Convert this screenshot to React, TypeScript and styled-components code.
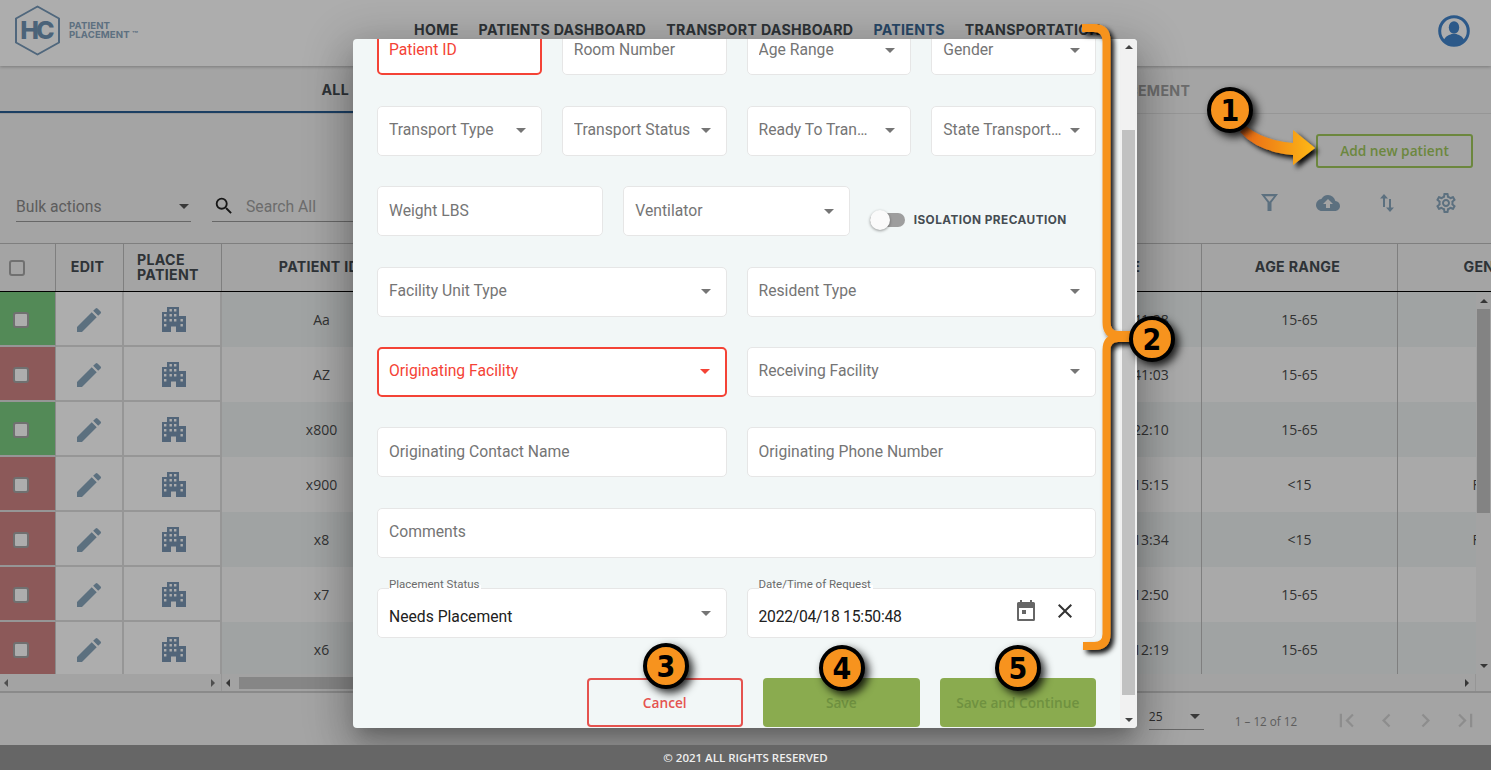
import React, { FC } from 'react'
import styled, { createGlobalStyle } from 'styled-components'
import {
  MdChevronLeft,
  MdChevronRight,
  MdClose,
  MdCloudUpload,
  MdEdit,
  MdFirstPage,
  MdLastPage,
  MdOutlineSettings,
  MdSearch,
} from 'react-icons/md'

const GlobalStyle = createGlobalStyle`
  html, body {
    margin: 0;
    height: 770px;
    overflow: hidden;
    background: #f2f2f2;
    font-family: 'Open Sans', sans-serif;
  }
  * { box-sizing: border-box; }
`

const Page = styled.div`
  width: 1491px;
  height: 770px;
  display: flex;
  flex-direction: column;
  position: relative;
  overflow: hidden;
`

/* ---------- top bar ---------- */

const Header = styled.header`
  height: 66px;
  flex: none;
  background: #fff;
  display: flex;
  align-items: center;
  padding: 0 20px 0 14px;
  box-shadow: 0 1px 3px rgba(0, 0, 0, 0.25);
  position: relative;
`

const Logo = styled.div`
  display: flex;
  align-items: center;
  width: 400px;
  flex: none;
  margin-top: -6px;
`

const HexMark = styled.div`
  width: 47px;
  height: 51px;
  position: relative;
  flex: none;
`

const HexLetters = styled.span`
  position: absolute;
  inset: 0;
  display: flex;
  align-items: center;
  justify-content: center;
  font: 800 25px 'Inter', sans-serif;
  letter-spacing: -3px;
  color: #6f93b3;
  padding-right: 3px;
`

const LogoText = styled.div`
  margin-left: 8px;
  font: 700 9.6px/9.5px 'Inter', sans-serif;
  color: #8aa5bd;
  letter-spacing: 0.1px;
`

const Nav = styled.nav`
  display: flex;
  gap: 20px;
  margin-top: -8px;
`

const NavItem = styled.span<{ $active?: boolean }>`
  font: 700 14.2px 'Inter', sans-serif;
  letter-spacing: 0.3px;
  color: ${(p) => (p.$active ? '#3c6a99' : '#454c52')};
  white-space: nowrap;
`

const Avatar = styled.div`
  margin-left: auto;
  width: 32px;
  height: 32px;
  color: #4184cb;
  margin-top: -4px;
  margin-right: 1px;
`

/* ---------- tabs ---------- */

const Tabs = styled.div`
  margin-top: 1px;
  height: 47px;
  flex: none;
  display: flex;
  border-bottom: 1px solid #ddd;
`

const Tab = styled.div<{ $active?: boolean }>`
  flex: 1;
  display: flex;
  align-items: center;
  justify-content: center;
  font: 700 14.2px 'Inter', sans-serif;
  letter-spacing: 0.3px;
  color: ${(p) => (p.$active ? '#454c52' : '#a0a0a0')};
  border-bottom: ${(p) => (p.$active ? '2px solid #2a5d92' : 'none')};
`

/* ---------- toolbar ---------- */

const Toolbar = styled.div`
  height: 129px;
  flex: none;
  display: flex;
  flex-direction: column;
`

const AddRow = styled.div`
  display: flex;
  justify-content: flex-end;
  padding: 20px 18px 0 0;
`

const AddButton = styled.button`
  width: 157px;
  height: 34px;
  padding-bottom: 2px;
  background: transparent;
  border: 2px solid #9fc85c;
  border-radius: 3px;
  color: #9fc85c;
  font: 600 13.7px 'Open Sans', sans-serif;
`

const ActionRow = styled.div`
  display: flex;
  align-items: flex-end;
  margin-top: 19px;
  padding-left: 16px;
`

const BulkSelect = styled.div`
  width: 175px;
  height: 31px;
  display: flex;
  align-items: center;
  justify-content: space-between;
  border-bottom: 1px solid #999;
  padding-right: 2px;
  font: 400 15.7px 'Roboto', sans-serif;
  color: #8a8a8a;
`

const SearchBox = styled.div`
  margin-left: 21px;
  width: 300px;
  height: 31px;
  display: flex;
  align-items: center;
  gap: 11px;
  border-bottom: 1px solid #999;
  font: 400 15.7px 'Roboto', sans-serif;
  color: #a0a0a0;
  svg {
    color: #222;
    margin-left: 1px;
  }
`

const ToolIcons = styled.div`
  margin-left: auto;
  display: flex;
  align-items: center;
  padding-right: 33px;
  gap: 35px;
  height: 31px;
  margin-bottom: 4px;
  color: #88a5bc;
`

const ToolIcon = styled.span`
  width: 24px;
  height: 24px;
  display: flex;
  align-items: center;
  justify-content: center;
`

/* ---------- table ---------- */

const Table = styled.div`
  flex: 1;
  min-height: 0;
  display: flex;
  flex-direction: column;
  border-top: 1px solid #bbb;
  position: relative;
  overflow: hidden;
`

const HeadRow = styled.div`
  height: 48px;
  flex: none;
  display: flex;
  border-bottom: 1px solid #000;
`

const HeadCell = styled.div<{ $w: number; $pad?: number }>`
  width: ${(p) => p.$w}px;
  flex: none;
  display: flex;
  align-items: center;
  justify-content: ${(p) => (p.$pad ? 'flex-start' : 'center')};
  padding: ${(p) => (p.$pad ? `0 0 0 ${p.$pad}px` : '0 4px 0 0')};
  border-right: 1px solid #bbb;
  font: 700 14.2px/14.5px 'Inter', sans-serif;
  letter-spacing: 0.3px;
  color: #454c52;
  white-space: nowrap;
`

const BodyRow = styled.div<{ $tint: boolean }>`
  height: 55px;
  flex: none;
  display: flex;
  background: ${(p) => (p.$tint ? '#ecf1f1' : '#fafafa')};
`

const StatusCell = styled.div<{ $ok: boolean }>`
  width: 56px;
  flex: none;
  display: flex;
  align-items: center;
  padding: 2px 0 0 13px;
  background: ${(p) => (p.$ok ? '#7bcc80' : '#ce8484')};
  border-right: 1px solid #ccc;
  border-bottom: 2px solid #ddd;
`

const FixedCell = styled.div<{ $w: number }>`
  width: ${(p) => p.$w}px;
  flex: none;
  display: flex;
  align-items: center;
  justify-content: center;
  padding-top: 2px;
  background: #fff;
  border-right: 2px solid #ddd;
  border-bottom: 2px solid #ddd;
  color: #88a5bc;
`

const Cell = styled.div<{ $w: number; $line?: boolean }>`
  width: ${(p) => p.$w}px;
  flex: none;
  display: flex;
  align-items: center;
  justify-content: center;
  font: 400 14px 'Open Sans', sans-serif;
  color: #4b4b4b;
  border-right: ${(p) => (p.$line ? '1px solid #bbb' : 'none')};
  white-space: nowrap;
`

const Check = styled.span<{ $fill?: boolean }>`
  width: 16px;
  height: 16px;
  border: 2px solid #a5a5a5;
  border-radius: 3px;
  background: ${(p) => (p.$fill ? '#fff' : 'transparent')};
`

const TableVScroll = styled.div`
  position: absolute;
  right: 0;
  top: 49px;
  bottom: 17px;
  width: 15px;
  background: #f1f1f1;
  display: flex;
  flex-direction: column;
  align-items: center;
  justify-content: space-between;
  padding: 6px 0;
`

const TableVThumb = styled.div`
  position: absolute;
  left: 1px;
  right: 1px;
  top: 16px;
  height: 204px;
  background: #c1c1c1;
`

const HScrollRow = styled.div`
  position: absolute;
  left: 0;
  right: 0;
  bottom: 0;
  height: 17px;
  display: flex;
  background: #f1f1f1;
`

const HScrollPart = styled.div<{ $w: number }>`
  width: ${(p) => p.$w}px;
  flex: none;
  display: flex;
  align-items: center;
  justify-content: space-between;
  padding: 0 6px 0 4px;
  border-right: 1px solid #ddd;
`

const HThumb = styled.div`
  position: absolute;
  left: 239px;
  width: 300px;
  top: 3px;
  bottom: 2px;
  background: #c6c6c6;
`

const Tri = styled.span<{ $dir: 'up' | 'down' | 'left' | 'right'; $color?: string; $size?: number }>`
  display: block;
  width: 0;
  height: 0;
  flex: none;
  ${(p) => {
    const s = p.$size ?? 4
    const c = p.$color ?? '#505050'
    if (p.$dir === 'up') return `border-left:${s}px solid transparent;border-right:${s}px solid transparent;border-bottom:${s}px solid ${c};`
    if (p.$dir === 'down') return `border-left:${s}px solid transparent;border-right:${s}px solid transparent;border-top:${s}px solid ${c};`
    if (p.$dir === 'left') return `border-top:${s}px solid transparent;border-bottom:${s}px solid transparent;border-right:${s}px solid ${c};`
    return `border-top:${s}px solid transparent;border-bottom:${s}px solid transparent;border-left:${s}px solid ${c};`
  }}
`

/* ---------- pagination / footer ---------- */

const Pagination = styled.div`
  height: 54px;
  flex: none;
  display: flex;
  align-items: center;
  justify-content: flex-end;
  border-top: 2px solid #ccc;
  padding-right: 12px;
  padding-top: 3px;
`

const PageSize = styled.div`
  width: 55px;
  height: 24px;
  display: flex;
  justify-content: space-between;
  align-items: center;
  border-bottom: 1px solid #999;
  font: 400 12px 'Open Sans', sans-serif;
  color: #444;
  padding: 0 4px 2px 0;
  margin-top: -5px;
`

const PageRange = styled.div`
  margin: 0 36px 0 31px;
  font: 400 11.7px 'Open Sans', sans-serif;
  color: #8a8a8a;
  white-space: nowrap;
`

const PageButtons = styled.div`
  display: flex;
  gap: 12.6px;
  color: #d0d0d0;
`

const Footer = styled.footer`
  height: 25px;
  flex: none;
  background: #666;
  display: flex;
  align-items: center;
  justify-content: center;
  color: #eee;
  font: 600 11.5px 'Open Sans', sans-serif;
  position: relative;
  z-index: 1;
`

/* ---------- dialog ---------- */

const Overlay = styled.div`
  position: absolute;
  inset: 0;
  background: rgba(0, 0, 0, 0.32);
  display: flex;
  align-items: flex-start;
  justify-content: center;
  padding: 39px 1px 0 0;
`

const Dialog = styled.div`
  width: 784px;
  height: 689px;
  background: #f2f7f7;
  border-radius: 4px;
  display: flex;
  overflow: hidden;
  box-shadow: 0 11px 15px -7px rgba(0, 0, 0, 0.2), 0 24px 38px 3px rgba(0, 0, 0, 0.14),
    0 9px 46px 8px rgba(0, 0, 0, 0.2);
`

const DialogBody = styled.div`
  flex: 1;
  min-width: 0;
  padding: 0 24px;
  display: flex;
  flex-direction: column;
`

const Form = styled.div`
  margin-top: -13.6px;
  display: flex;
  flex-direction: column;
  gap: 30.4px;
`

const FormRow = styled.div<{ $cols: number }>`
  display: grid;
  grid-template-columns: repeat(${(p) => p.$cols}, minmax(0, 1fr));
  column-gap: 20px;
  height: 50px;
`

const Field = styled.div<{ $error?: boolean; $span?: number }>`
  position: relative;
  display: flex;
  align-items: center;
  min-width: 0;
  height: 50px;
  padding: 0 12px 2px ${(p) => (p.$error ? 10 : 11)}px;
  background: #fff;
  border-radius: 5px;
  border: ${(p) => (p.$error ? '2px solid #f44336' : '1px solid #e6e6e6')};
  color: ${(p) => (p.$error ? '#f44336' : '#757575')};
  font: 400 15.7px 'Roboto', sans-serif;
  grid-column: span ${(p) => p.$span ?? 1};
`

const FieldText = styled.span<{ $value?: boolean }>`
  flex: 1;
  min-width: 0;
  overflow: hidden;
  text-overflow: ellipsis;
  white-space: nowrap;
  color: ${(p) => (p.$value ? '#212121' : 'inherit')};
  margin-top: ${(p) => (p.$value ? 9 : 0)}px;
`

const DateText = styled(FieldText)`
  letter-spacing: -0.25px;
`

const FloatLabel = styled.span`
  position: absolute;
  left: 11px;
  top: -12px;
  font: 400 11.5px 'Roboto', sans-serif;
  color: #6b6b6b;
  background: linear-gradient(#f2f7f7 60%, #fff 60%);
  padding-right: 2px;
`

const CaretBox = styled.span`
  flex: none;
  margin-left: 8px;
  margin-right: 3px;
  padding-top: 2px;
`

const ToggleField = styled.div`
  display: flex;
  align-items: center;
  padding-top: 18px;
  gap: 9px;
  white-space: nowrap;
  font: 700 11.8px 'Inter', sans-serif;
  letter-spacing: 0.45px;
  color: #454c52;
`

const ToggleTrack = styled.span`
  width: 35px;
  height: 14px;
  border-radius: 7px;
  background: #9e9e9e;
  position: relative;
  flex: none;
`

const ToggleKnob = styled.span`
  position: absolute;
  left: 0;
  top: -3px;
  width: 20px;
  height: 20px;
  border-radius: 50%;
  background: #fafafa;
  box-shadow: 0 1px 3px rgba(0, 0, 0, 0.4);
`

const DateActions = styled.span`
  display: flex;
  align-items: center;
  gap: 15px;
  margin-right: 6px;
  margin-top: -2px;
`

const Actions = styled.div`
  display: flex;
  justify-content: flex-end;
  gap: 20px;
  margin-top: 40px;
`

const ActionButton = styled.button<{ $cancel?: boolean }>`
  width: 156.500px;
  height: 49px;
  border-radius: 4px;
  font: 600 13.7px 'Open Sans', sans-serif;
  border: ${(p) => (p.$cancel ? '2px solid #e5534f' : 'none')};
  background: ${(p) => (p.$cancel ? 'transparent' : '#8aab4f')};
  color: ${(p) => (p.$cancel ? '#e5534f' : '#6f9140')};
`

const DialogScroll = styled.div`
  width: 17px;
  flex: none;
  background: #f1f1f1;
  position: relative;
  display: flex;
  flex-direction: column;
  align-items: center;
  justify-content: space-between;
  padding: 6px 0;
`

const DialogThumb = styled.div`
  position: absolute;
  left: 2px;
  right: 2px;
  top: 91px;
  height: 565px;
  background: #c1c1c1;
`

/* ---------- screenshot annotations ---------- */

const Markup = styled.svg`
  position: absolute;
  inset: 0;
  pointer-events: none;
  z-index: 2;
`

const Badge = styled.div<{ $x: number; $y: number }>`
  position: absolute;
  z-index: 3;
  left: ${(p) => p.$x - 23}px;
  top: ${(p) => p.$y - 23}px;
  width: 46px;
  height: 46px;
  border-radius: 50%;
  border: 4px solid #000;
  background: #f7931e;
  display: flex;
  align-items: center;
  justify-content: center;
  font: 700 30px 'DejaVu Sans', sans-serif;
  font-stretch: condensed;
  color: #000;
  box-shadow: 4px 4px 8px rgba(0, 0, 0, 0.85);
`

/* ---------- small drawings ---------- */

const BuildingSvg = styled.svg`
  margin-left: 3px;
`

// windows are punched out of the silhouette, [x, y] in the 24x25 box
const buildingWindows = [
  [7.5, 2], [12, 2],
  [2, 7], [7.5, 7], [12, 7],
  [2, 12], [7.5, 12], [12, 12], [18.5, 12],
  [2, 17], [18.5, 17],
]

const Building: FC = () => (
  <BuildingSvg width="24" height="25" viewBox="0 0 24 25" fill="#7996b3">
    <path
      fillRule="evenodd"
      d={
        'M5 0H17V9H24V25H14V19.500H9V25H0V5H5Z' +
        buildingWindows.map(([x, y]) => `M${x} ${y}h2.400v2.400h-2.400Z`).join('')
      }
    />
  </BuildingSvg>
)

const FilterIcon: FC = () => (
  <svg width="17" height="17" viewBox="0 0 17 17" fill="currentColor">
    <path fillRule="evenodd" d="M0 0H17L10.500 8.500V17H6.500V8.500ZM4 2.200 8.500 7.800 13 2.200Z" />
  </svg>
)

const SortIcon: FC = () => (
  <svg width="14" height="18" viewBox="0 0 14 18" fill="currentColor">
    <path d="M4 0 8 4.500H5V13H3V4.500H0ZM10 18 6 13.500H9V5H11V13.500H14Z" />
  </svg>
)

const Calendar: FC = () => (
  <svg width="24" height="24" viewBox="0 0 24 24" fill="#666">
    <path
      fillRule="evenodd"
      d="M6 1h2v2h8V1h2v2h1.5A1.5 1.5 0 0 1 21 4.5v16a1.5 1.5 0 0 1-1.5 1.5h-15A1.5 1.5 0 0 1 3 20.5v-16A1.5 1.5 0 0 1 4.5 3H6V1ZM5 9v11h14V9H5Zm3 2h4v4H8v-4Z"
    />
  </svg>
)

const AvatarIcon: FC = () => (
  <svg width="32" height="32" viewBox="0 0 32 32">
    <circle cx="16" cy="16" r="14.3" fill="none" stroke="currentColor" strokeWidth="3" />
    <ellipse cx="16" cy="12.5" rx="5.2" ry="6.2" fill="currentColor" />
    <path d="M5.5 26c1.5-5 6-6 8-7h5c2 1 6.500 2 8 7a14 14 0 0 1-21 0Z" fill="currentColor" />
  </svg>
)

const HexOutline: FC = () => (
  <svg width="47" height="51" viewBox="0 0 47 51">
    <path
      d="M23.500 1.500 45 13.500v24L23.500 49.500 2 37.500v-24Z"
      fill="none"
      stroke="#7699b8"
      strokeWidth="2"
      strokeLinejoin="round"
    />
  </svg>
)

/* ---------- data ---------- */

interface PatientRow {
  id: string
  ok: boolean
  time: string
  age: string
  gender: string
}

const rows: PatientRow[] = [
  { id: 'Aa', ok: true, time: '15:41:28', age: '15-65', gender: '' },
  { id: 'AZ', ok: false, time: '15:41:03', age: '15-65', gender: '' },
  { id: 'x800', ok: true, time: '15:22:10', age: '15-65', gender: '' },
  { id: 'x900', ok: false, time: '15:15:15', age: '<15', gender: 'Female' },
  { id: 'x8', ok: false, time: '15:13:34', age: '<15', gender: 'Female' },
  { id: 'x7', ok: false, time: '15:12:50', age: '15-65', gender: '' },
  { id: 'x6', ok: false, time: '15:12:19', age: '15-65', gender: '' },
]

const Caret: FC = () => (
  <CaretBox>
    <Tri $dir="down" $size={5} $color="#757575" />
  </CaretBox>
)

const SelectField: FC<{ label: string; span?: number; error?: boolean }> = ({ label, span, error }) => (
  <Field $span={span} $error={error}>
    <FieldText>{label}</FieldText>
    <CaretBox>
      <Tri $dir="down" $size={5} $color={error ? '#f44336' : '#757575'} />
    </CaretBox>
  </Field>
)

const TextField: FC<{ label: string; span?: number; error?: boolean }> = ({ label, span, error }) => (
  <Field $span={span} $error={error}>
    <FieldText>{label}</FieldText>
  </Field>
)

export default function App() {
  return (
    <Page>
      <GlobalStyle />
      <Header>
        <Logo>
          <HexMark>
            <HexOutline />
            <HexLetters>HC</HexLetters>
          </HexMark>
          <LogoText>
            PATIENT
            <br />
            PLACEMENT ™
          </LogoText>
        </Logo>
        <Nav>
          <NavItem>HOME</NavItem>
          <NavItem>PATIENTS DASHBOARD</NavItem>
          <NavItem>TRANSPORT DASHBOARD</NavItem>
          <NavItem $active>PATIENTS</NavItem>
          <NavItem>TRANSPORTATION</NavItem>
        </Nav>
        <Avatar>
          <AvatarIcon />
        </Avatar>
      </Header>

      <Tabs>
        <Tab $active>ALL PATIENTS</Tab>
        <Tab>NEEDS PLACEMENT</Tab>
      </Tabs>

      <Toolbar>
        <AddRow>
          <AddButton>Add new patient</AddButton>
        </AddRow>
        <ActionRow>
          <BulkSelect>
            Bulk actions
            <Tri $dir="down" $size={5} $color="#555" />
          </BulkSelect>
          <SearchBox>
            <MdSearch size={22} />
            Search All
          </SearchBox>
          <ToolIcons>
            <ToolIcon>
              <FilterIcon />
            </ToolIcon>
            <ToolIcon>
              <MdCloudUpload size={28} />
            </ToolIcon>
            <ToolIcon>
              <SortIcon />
            </ToolIcon>
            <ToolIcon>
              <MdOutlineSettings size={24} />
            </ToolIcon>
          </ToolIcons>
        </ActionRow>
      </Toolbar>

      <Table>
        <HeadRow>
          <HeadCell $w={56} $pad={9}>
            <Check />
          </HeadCell>
          <HeadCell $w={68}>EDIT</HeadCell>
          <HeadCell $w={98} $pad={13}>
            PLACE
            <br />
            PATIENT
          </HeadCell>
          <HeadCell $w={199}>PATIENT ID</HeadCell>
          <HeadCell $w={582}>ROOM NUMBER</HeadCell>
          <HeadCell $w={199}>DATE/TIME</HeadCell>
          <HeadCell $w={196}>AGE RANGE</HeadCell>
          <HeadCell $w={196}>GENDER</HeadCell>
        </HeadRow>
        {rows.map((row, i) => (
          <BodyRow key={row.id} $tint={i % 2 === 0}>
            <StatusCell $ok={row.ok}>
              <Check $fill />
            </StatusCell>
            <FixedCell $w={68}>
              <MdEdit size={32} />
            </FixedCell>
            <FixedCell $w={98}>
              <Building />
            </FixedCell>
            <Cell $w={199}>{row.id}</Cell>
            <Cell $w={582} />
            <Cell $w={199} $line>
              2022/04/18 {row.time}
            </Cell>
            <Cell $w={196} $line>
              {row.age}
            </Cell>
            <Cell $w={196}>{row.gender}</Cell>
          </BodyRow>
        ))}
        <TableVScroll>
          <Tri $dir="up" />
          <TableVThumb />
          <Tri $dir="down" />
        </TableVScroll>
        <HScrollRow>
          <HScrollPart $w={222}>
            <Tri $dir="left" $color="#777" />
            <Tri $dir="right" $color="#777" />
          </HScrollPart>
          <HScrollPart $w={1254}>
            <Tri $dir="left" />
            <Tri $dir="right" />
          </HScrollPart>
          <HThumb />
        </HScrollRow>
      </Table>

      <Pagination>
        <PageSize>
          25
          <Tri $dir="down" $size={5} $color="#555" />
        </PageSize>
        <PageRange>1 – 12 of 12</PageRange>
        <PageButtons>
          <MdFirstPage size={27} />
          <MdChevronLeft size={27} />
          <MdChevronRight size={27} />
          <MdLastPage size={27} />
        </PageButtons>
      </Pagination>
      <Footer>© 2021 ALL RIGHTS RESERVED</Footer>

      <Overlay>
        <Dialog>
          <DialogBody>
            <Form>
              <FormRow $cols={4}>
                <TextField label="Patient ID" error />
                <TextField label="Room Number" />
                <SelectField label="Age Range" />
                <SelectField label="Gender" />
              </FormRow>
              <FormRow $cols={4}>
                <SelectField label="Transport Type" />
                <SelectField label="Transport Status" />
                <SelectField label="Ready To Tran…" />
                <SelectField label="State Transport Required" />
              </FormRow>
              <FormRow $cols={3}>
                <TextField label="Weight LBS" />
                <SelectField label="Ventilator" />
                <ToggleField>
                  <ToggleTrack>
                    <ToggleKnob />
                  </ToggleTrack>
                  ISOLATION PRECAUTION
                </ToggleField>
              </FormRow>
              <FormRow $cols={2}>
                <SelectField label="Facility Unit Type" />
                <SelectField label="Resident Type" />
              </FormRow>
              <FormRow $cols={2}>
                <SelectField label="Originating Facility" error />
                <SelectField label="Receiving Facility" />
              </FormRow>
              <FormRow $cols={2}>
                <TextField label="Originating Contact Name" />
                <TextField label="Originating Phone Number" />
              </FormRow>
              <FormRow $cols={1}>
                <TextField label="Comments" />
              </FormRow>
              <FormRow $cols={2}>
                <Field>
                  <FloatLabel>Placement Status</FloatLabel>
                  <FieldText $value>Needs Placement</FieldText>
                  <Caret />
                </Field>
                <Field>
                  <FloatLabel>Date/Time of Request</FloatLabel>
                  <DateText $value>2022/04/18 15:50:48</DateText>
                  <DateActions>
                    <Calendar />
                    <MdClose size={24} color="#333" />
                  </DateActions>
                </Field>
              </FormRow>
            </Form>
            <Actions>
              <ActionButton $cancel>Cancel</ActionButton>
              <ActionButton>Save</ActionButton>
              <ActionButton>Save and Continue</ActionButton>
            </Actions>
          </DialogBody>
          <DialogScroll>
            <Tri $dir="up" $color="#444" />
            <DialogThumb />
            <Tri $dir="down" $color="#444" />
          </DialogScroll>
        </Dialog>
      </Overlay>

      <Markup width="1491" height="770" viewBox="0 0 1491 770">
        <defs>
          <linearGradient id="arrowFill" x1="0" x2="1" y1="0" y2="0">
            <stop offset="0" stopColor="#e8661a" />
            <stop offset="1" stopColor="#fdb913" />
          </linearGradient>
          <filter id="markShadow" x="-20%" y="-20%" width="150%" height="150%">
            <feDropShadow dx="3.500" dy="3.500" stdDeviation="2.500" floodColor="#000" floodOpacity="0.95" />
          </filter>
        </defs>
        <path
          d="M1082 28H1094Q1106.500 28 1106.500 41V322Q1106.500 335 1118 335H1132M1132 338H1118Q1106.500 338 1106.500 350V634Q1106.500 646 1094 646H1083"
          fill="none"
          stroke="#f7931e"
          strokeWidth="8"
          filter="url(#markShadow)"
        />
        <path
          d="M1246 126Q1262 140 1293 143V130L1315 148L1293 165V155Q1258 152 1240 132Z"
          fill="url(#arrowFill)"
          filter="url(#markShadow)"
        />
      </Markup>
      <Badge $x={1230} $y={110}>1</Badge>
      <Badge $x={1152} $y={339}>2</Badge>
      <Badge $x={666} $y={666}>3</Badge>
      <Badge $x={842} $y={668}>4</Badge>
      <Badge $x={1018} $y={668}>5</Badge>
    </Page>
  )
}
